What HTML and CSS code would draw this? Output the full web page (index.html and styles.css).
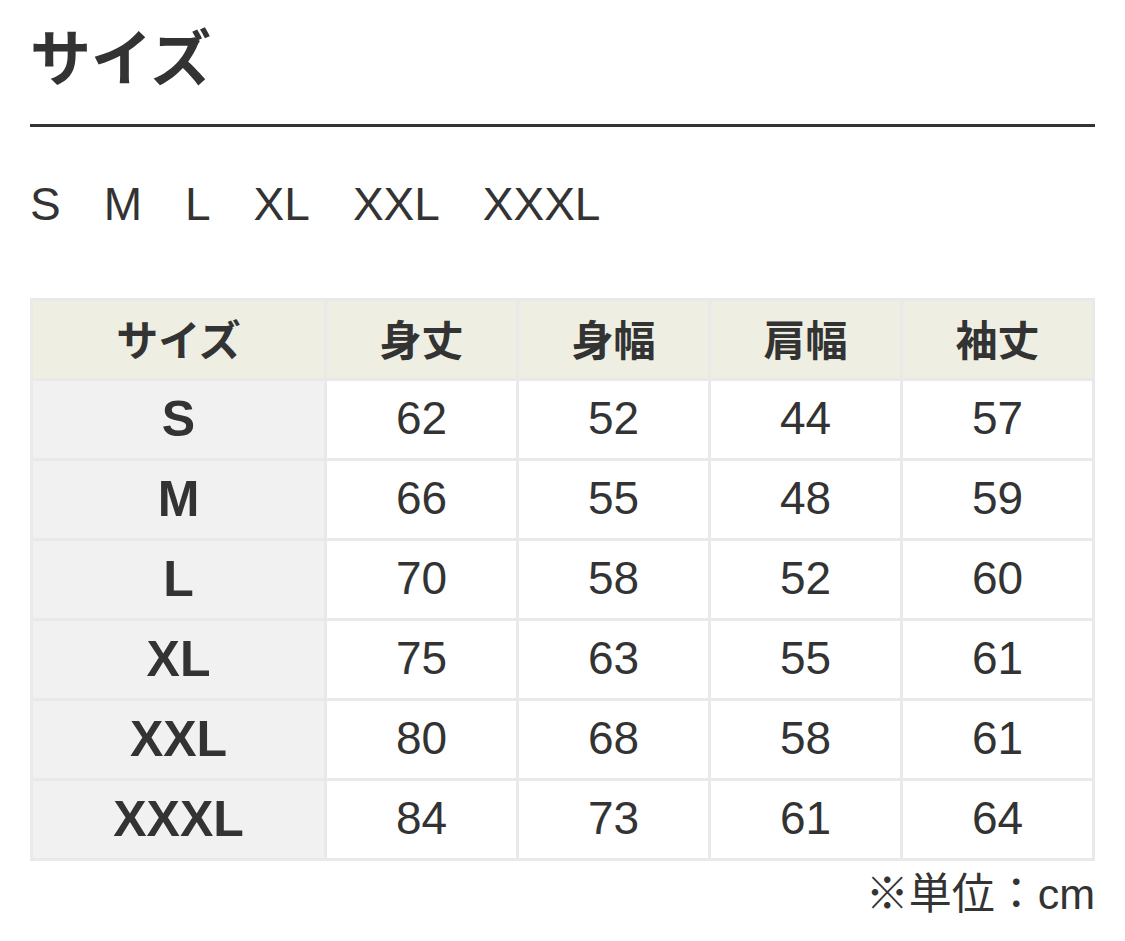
FILE: index.html
```html
<!DOCTYPE html>
<html lang="ja">
<head>
<meta charset="utf-8">
<link rel="stylesheet" href="styles.css">
</head>
<body>
<div class="page">
  <h1 class="title">サイズ</h1>
  <div class="rule"></div>
  <ul class="sizes">
    <li>S</li><li>M</li><li>L</li><li>XL</li><li>XXL</li><li>XXXL</li>
  </ul>
  <table class="chart">
    <thead>
      <tr><th class="c1">サイズ</th><th>身丈</th><th>身幅</th><th>肩幅</th><th>袖丈</th></tr>
    </thead>
    <tbody>
      <tr><td class="sz">S</td><td>62</td><td>52</td><td>44</td><td>57</td></tr>
      <tr><td class="sz">M</td><td>66</td><td>55</td><td>48</td><td>59</td></tr>
      <tr><td class="sz">L</td><td>70</td><td>58</td><td>52</td><td>60</td></tr>
      <tr><td class="sz">XL</td><td>75</td><td>63</td><td>55</td><td>61</td></tr>
      <tr><td class="sz">XXL</td><td>80</td><td>68</td><td>58</td><td>61</td></tr>
      <tr><td class="sz">XXXL</td><td>84</td><td>73</td><td>61</td><td>64</td></tr>
    </tbody>
  </table>
  <p class="note">※単位：<span class="unit">cm</span></p>
</div>
</body>
</html>
```
FILE: styles.css
```css
html, body {
  margin: 0;
  padding: 0;
  background: #fff;
}
body {
  font-family: "Noto Sans CJK JP", "Noto Sans", sans-serif;
  color: #333;
}
.page {
  padding: 24px 30px 0 30px;
}
.title {
  margin: 0;
  font-size: 61px;
  line-height: 61px;
  font-weight: 700;
  padding-left: 0;
}
.rule {
  margin-top: 39px;
  height: 3px;
  background: #333;
}
.sizes {
  list-style: none;
  margin: 54px 0 0 0;
  padding: 0;
  display: flex;
  gap: 43px;
  font-family: "Liberation Sans", Arial, sans-serif;
  font-size: 46px;
  line-height: 46px;
  font-weight: 400;
}
.chart {
  margin-top: 71px;
  width: 100%;
  border-collapse: collapse;
  table-layout: fixed;
}
.chart th, .chart td {
  border: 3px solid #e9e9e9;
  padding: 0;
  text-align: center;
  vertical-align: middle;
}
.chart th {
  height: 73px;
  padding-bottom: 4px;
  background: #eeeee2;
  font-size: 42px;
  font-weight: 700;
}
.chart th.c1 {
  width: 291px;
}
.chart td {
  height: 73px;
  padding-bottom: 4px;
  font-family: "Liberation Sans", Arial, sans-serif;
  font-size: 46px;
  font-weight: 400;
  background: #fff;
}
.chart td.sz {
  height: 75px;
  padding-bottom: 2px;
  background: #f1f1f1;
  font-weight: 700;
  font-size: 50px;
}
.note {
  margin: 8px 0 0 0;
  text-align: right;
  font-size: 43px;
  line-height: 43px;
}
.unit {
  font-family: "Liberation Sans", Arial, sans-serif;
}
```
